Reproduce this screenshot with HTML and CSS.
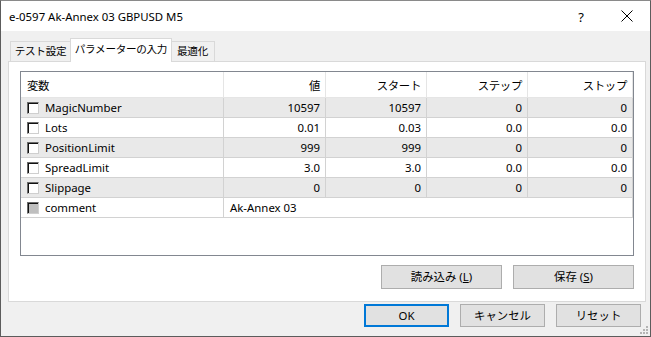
FILE: index.html
```html
<!DOCTYPE html>
<html lang="ja">
<head>
  <meta charset="UTF-8">
  <title>e-0597 Ak-Annex 03 GBPUSD M5</title>
  <link rel="stylesheet" href="styles.css">
</head>
<body>
  <div class="window">
    <div class="titlebar">
      <span class="title">e-0597 Ak-Annex 03 GBPUSD M5</span>
      <span class="help">?</span>
      <span class="close">
        <svg width="12" height="12" viewBox="0 0 12 12"><path d="M0.5 0.5 L11.5 11.5 M11.5 0.5 L0.5 11.5" stroke="#000" stroke-width="1" fill="none"/></svg>
      </span>
    </div>
    <div class="client">
      <div class="tabs">
        <div class="tab tab-test">テスト設定</div>
        <div class="tab tab-param selected">パラメーターの入力</div>
        <div class="tab tab-opt">最適化</div>
      </div>
      <div class="panel">
        <div class="grid">
          <div class="row head">
            <div class="cell">変数</div>
            <div class="cell num">値</div>
            <div class="cell num">スタート</div>
            <div class="cell num">ステップ</div>
            <div class="cell num">ストップ</div>
          </div>
          <div class="row alt">
            <div class="cell name"><span class="check"></span>MagicNumber</div>
            <div class="cell num">10597</div>
            <div class="cell num">10597</div>
            <div class="cell num">0</div>
            <div class="cell num">0</div>
          </div>
          <div class="row">
            <div class="cell name"><span class="check"></span>Lots</div>
            <div class="cell num">0.01</div>
            <div class="cell num">0.03</div>
            <div class="cell num">0.0</div>
            <div class="cell num">0.0</div>
          </div>
          <div class="row alt">
            <div class="cell name"><span class="check"></span>PositionLimit</div>
            <div class="cell num">999</div>
            <div class="cell num">999</div>
            <div class="cell num">0</div>
            <div class="cell num">0</div>
          </div>
          <div class="row">
            <div class="cell name"><span class="check"></span>SpreadLimit</div>
            <div class="cell num">3.0</div>
            <div class="cell num">3.0</div>
            <div class="cell num">0.0</div>
            <div class="cell num">0.0</div>
          </div>
          <div class="row alt">
            <div class="cell name"><span class="check"></span>Slippage</div>
            <div class="cell num">0</div>
            <div class="cell num">0</div>
            <div class="cell num">0</div>
            <div class="cell num">0</div>
          </div>
          <div class="row">
            <div class="cell name"><span class="check disabled"></span>comment</div>
            <div class="cell wide">Ak-Annex 03</div>
          </div>
        </div>
        <div class="panel-buttons">
          <button class="btn wide-btn">読み込み (<u>L</u>)</button>
          <button class="btn wide-btn">保存 (<u>S</u>)</button>
        </div>
      </div>
      <div class="dialog-buttons">
        <button class="btn default">OK</button>
        <button class="btn">キャンセル</button>
        <button class="btn">リセット</button>
      </div>
      <div class="grip">
        <svg width="9" height="9" viewBox="0 0 9 9" fill="#b4b4b4">
          <rect x="6" y="0" width="2" height="2"/>
          <rect x="3" y="3" width="2" height="2"/><rect x="6" y="3" width="2" height="2"/>
          <rect x="0" y="6" width="2" height="2"/><rect x="3" y="6" width="2" height="2"/><rect x="6" y="6" width="2" height="2"/>
        </svg>
      </div>
    </div>
  </div>
</body>
</html>
```

FILE: styles.css
```css
* {
  box-sizing: border-box;
}
body {
  margin: 0;
  padding: 0;
  font-family: 'Noto Sans', 'Noto Sans CJK JP', sans-serif;
  font-size: 11.4px;
  color: #000;
  background-color: #fff;
}
.window {
  width: 651px;
  height: 337px;
  border: 1px solid #5c5c5c;
  border-top-color: #8a8a8a;
  display: flex;
  flex-direction: column;
  background-color: #f0f0f0;
}
.titlebar {
  height: 30px;
  background-color: #fff;
  display: flex;
  align-items: center;
  padding-left: 8px;
}
.title {
  flex: 1;
}
.help {
  width: 46px;
  text-align: center;
  font-size: 13px;
  margin-top: 1px;
}
.close {
  width: 46px;
  display: flex;
  justify-content: center;
}
.client {
  flex: 1;
  position: relative;
  padding: 8px 4px 0 7px;
}
.tabs {
  display: flex;
  align-items: flex-end;
  height: 22px;
  padding-left: 2px;
  position: relative;
  z-index: 1;
}
.tab {
  height: 20px;
  padding: 0;
  border: 1px solid #d9d9d9;
  border-bottom: none;
  background-color: #f0f0f0;
  display: flex;
  align-items: center;
  justify-content: center;
  font-size: 10.6px;
  letter-spacing: -0.3px;
  line-height: 1;
}
.tab + .tab {
  margin-left: -1px;
}
.tab-test {
  width: 61px;
}
.tab-param {
  width: 102px;
}
.tab-opt {
  width: 45px;
}
.tab.selected {
  height: 24px;
  margin-bottom: -1px;
  background-color: #fff;
  margin-right: -1px;
  position: relative;
  z-index: 2;
  padding-bottom: 3px;
}
.panel {
  width: 638px;
  height: 241px;
  background-color: #fff;
  border: 1px solid #d9d9d9;
  padding: 9px 11px 0 11px;
}
.grid {
  width: 614px;
  height: 185px;
  border: 1px solid #828790;
  background-color: #fff;
}
.row {
  display: grid;
  grid-template-columns: 203px 102px 101px 101px 105px;
  height: 20px;
  border-bottom: 1px solid #d2d2d2;
}
.row.head {
  height: 26px;
  border-bottom: 1px solid #e5e5e5;
}
.row.alt {
  background-color: #e9e9e9;
}
.cell {
  display: flex;
  align-items: center;
  padding: 0 5px 0 6px;
  border-right: 1px solid #d2d2d2;
  white-space: nowrap;
}
.head .cell {
  border-right-color: #e5e5e5;
  padding-top: 1px;
  letter-spacing: -0.3px;
}
.num {
  justify-content: flex-end;
}
.wide {
  grid-column: 2 / 6;
}
.check {
  width: 12px;
  height: 12px;
  margin-right: 6px;
  background-color: #fff;
  border-top: 1px solid #6b6b6b;
  border-left: 1px solid #6b6b6b;
  border-right: 1px solid #cfcfcf;
  border-bottom: 1px solid #cfcfcf;
  box-shadow: inset 1px 1px 0 #111;
}
.check.disabled {
  background-color: #bfbfbf;
}
.panel-buttons {
  display: flex;
  justify-content: flex-end;
  gap: 11px;
  margin-top: 9px;
}
.btn {
  height: 24px;
  font-family: 'Noto Sans', 'Noto Sans CJK JP', sans-serif;
  font-size: 11.4px;
  color: #000;
  background-color: #e1e1e1;
  border: 1px solid #adadad;
  padding: 0;
  line-height: 1;
}
.wide-btn {
  width: 121px;
}
.dialog-buttons {
  display: flex;
  justify-content: flex-end;
  gap: 11px;
  margin-top: 2px;
  padding-right: 5px;
}
.dialog-buttons .btn {
  width: 85px;
  height: 23px;
}
.btn.default {
  border: 2px solid #0078d7;
}
.grip {
  position: absolute;
  right: 1px;
  bottom: 1px;
  line-height: 0;
}
```
